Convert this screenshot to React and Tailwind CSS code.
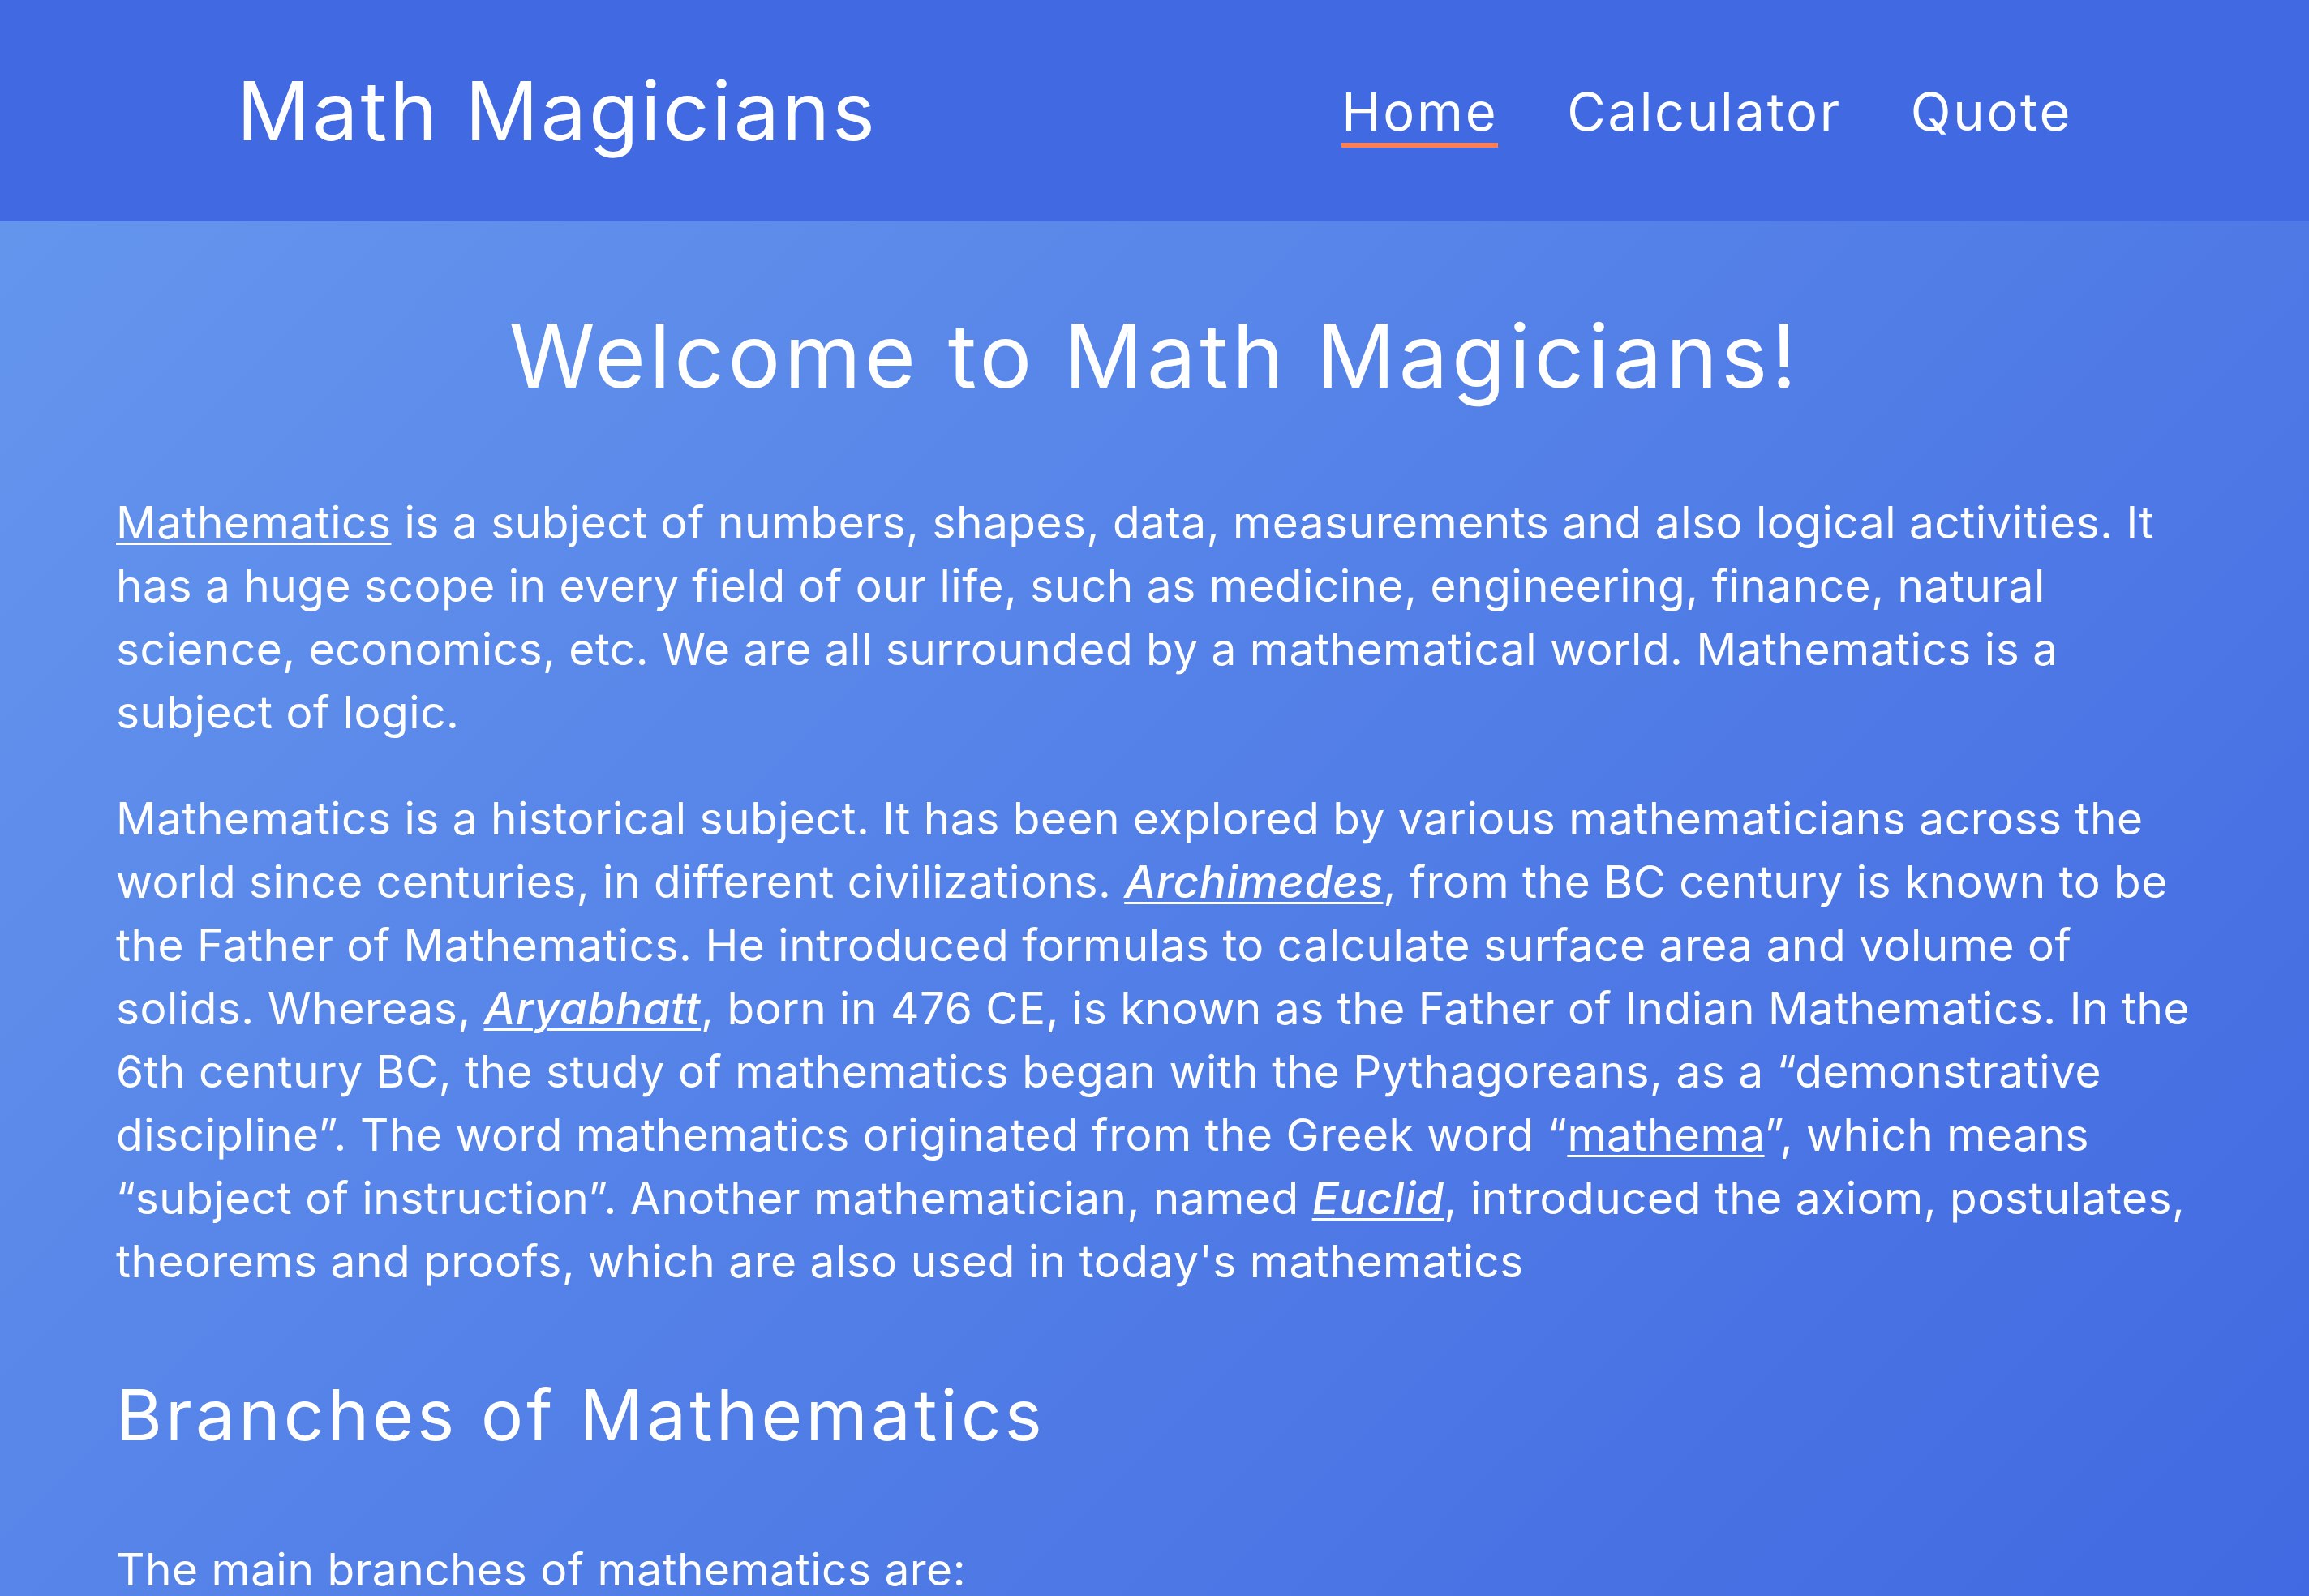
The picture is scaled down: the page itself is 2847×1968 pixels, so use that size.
import React from "react";

const font = { fontFamily: "Inter, 'Noto Sans', sans-serif" };

const linkCls = "underline underline-offset-[5px] decoration-[3px]";
const nameCls = "italic font-medium underline underline-offset-[5px] decoration-[3px]";

const NavLink = ({ label, active }) => (
  <a
    href="#"
    className={`text-[65px] leading-none tracking-[2.7px] text-white pb-[6px] border-b-[6px] ${
      active ? "border-[#FF7F50]" : "border-transparent"
    }`}
  >
    {label}
  </a>
);

const App = () => {
  return (
    <div className="min-h-screen flex flex-col text-white" style={font}>
      {/* header */}
      <header className="h-[273px] shrink-0 bg-[#4169E1] flex items-center justify-between px-[292px]">
        <h2 className="text-[100px] leading-none font-normal tracking-[3px]">
          Math Magicians
        </h2>
        <nav className="flex items-center gap-[85px] pt-[14px]">
          <NavLink label="Home" active />
          <NavLink label="Calculator" />
          <NavLink label="Quote" />
        </nav>
      </header>

      {/* main content */}
      <main className="flex-1 bg-[linear-gradient(135deg,#6495ED,#4169E1)] px-[143px] pt-[101px]">
        <h1 className="text-center text-[108px] leading-[1.2] font-normal tracking-[4.6px]">
          Welcome to Math Magicians!
        </h1>

        <div className="text-[55px] leading-[78px] tracking-[0.5px] mt-[101px] whitespace-nowrap">
          <p className="mb-[53px]">
            <a href="#" className={linkCls}>Mathematics</a> is a subject of
            numbers, shapes, data, measurements and also logical activities. It
            <br />
            has a huge scope in every field of our life, such as medicine,
            engineering, finance, natural
            <br />
            science, economics, etc. We are all surrounded by a mathematical
            world. Mathematics is a
            <br />
            subject of logic.
          </p>
          <p>
            Mathematics is a historical subject. It has been explored by various
            mathematicians across the
            <br />
            world since centuries, in different civilizations.{" "}
            <a href="#" className={nameCls}>Archimedes</a>, from the BC century
            is known to be
            <br />
            the Father of Mathematics. He introduced formulas to calculate
            surface area and volume of
            <br />
            solids. Whereas, <a href="#" className={nameCls}>Aryabhatt</a>, born
            in 476 CE, is known as the Father of Indian Mathematics. In the
            <br />
            6th century BC, the study of mathematics began with the
            Pythagoreans, as a “demonstrative
            <br />
            discipline”. The word mathematics originated from the Greek word “
            <a href="#" className={linkCls}>mathema</a>”, which means
            <br />
            “subject of instruction”. Another mathematician, named{" "}
            <a href="#" className={nameCls}>Euclid</a>, introduced the axiom,
            postulates,
            <br />
            theorems and proofs, which are also used in today's mathematics
          </p>

          <h2 className="text-[87px] leading-[1.2] font-normal tracking-[4.2px] mt-[99px] mb-[99px]">
            Branches of Mathematics
          </h2>

          <p>The main branches of mathematics are:</p>
        </div>
      </main>
    </div>
  );
};

export default App;
